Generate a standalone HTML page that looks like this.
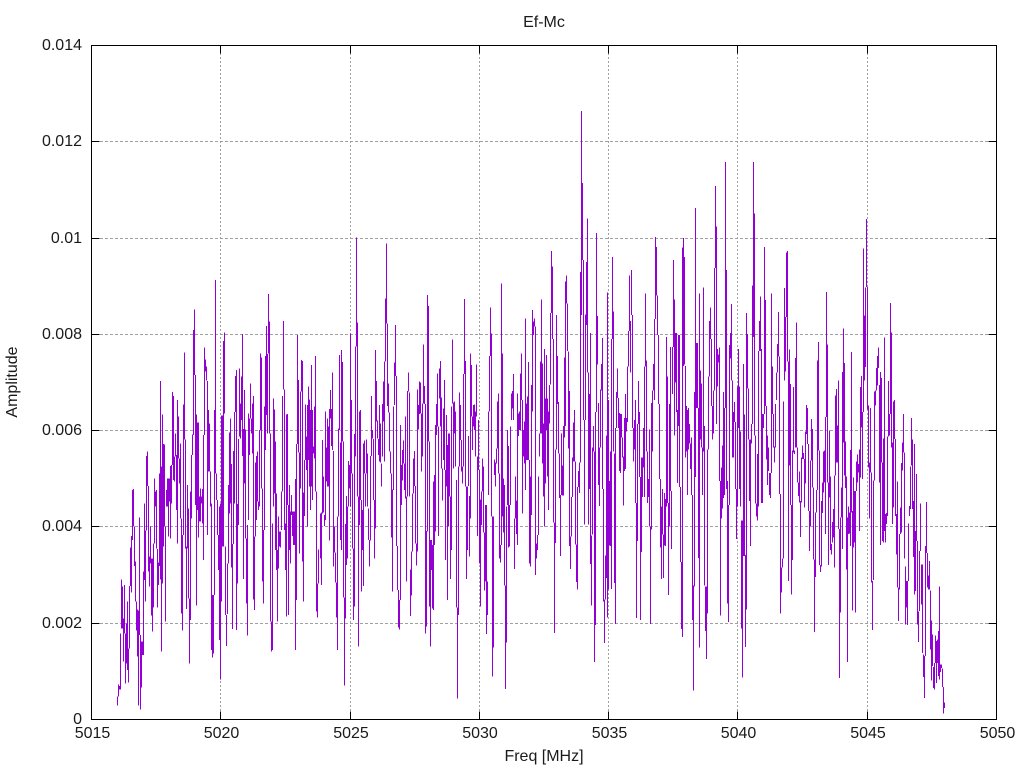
<!DOCTYPE html>
<html>
<head>
<meta charset="utf-8">
<title>Ef-Mc</title>
<style>
html,body{margin:0;padding:0;background:#fff;width:1024px;height:768px;overflow:hidden}
svg{display:block}
text{font-family:"Liberation Sans",sans-serif;font-size:16px;fill:#1a1a1a}
</style>
</head>
<body>
<svg width="1024" height="768" viewBox="0 0 1024 768" xmlns="http://www.w3.org/2000/svg">
<rect width="1024" height="768" fill="#fff"/>
<g stroke="#a0a0a0" stroke-width="1" fill="none" shape-rendering="crispEdges">
<path stroke-dasharray="3 2" d="M100 141.5H988M100 238.5H988M100 334.5H988M100 430.5H988M100 526.5H988M100 623.5H988"/>
<path stroke-dasharray="2 2" d="M220.5 53V711M350.5 53V711M479.5 53V711M608.5 53V711M737.5 53V711M867.5 53V711"/>
</g>
<g stroke="#9400d3" fill="none" stroke-width="3" shape-rendering="crispEdges">
<path transform="translate(90,270) scale(.33333)" d="M82 1280V1307M85 1243V1280M88 1248V1258M91 1090V1258M94 928V1075M97 950V1075M100 1045V1175M103 945V1090M106 1090V1240M109 1060V1180M112 995V1200M115 1135V1238M118 948V1135M121 832V948M124 798V968M127 660V810M130 657V770M133 770V888M136 875V995M139 995V1082M142 1018V1160M145 1022V1307M148 742V1095M151 1095V1318M154 1115V1252M157 1115V1155M160 905V1155M163 700V930M166 782V995M169 558V782M172 544V648M175 648V905M178 860V950M181 770V880M184 865V1037M187 865V1085M190 820V1012M193 625V820M196 665V710M199 660V835M202 837V1012M205 878V945M208 610V888M211 333V928M214 590V1145M217 433V940M220 522V830M223 523V770M226 770V1055M229 660V710M232 625V710M235 625V800M238 625V695M241 588V805M244 585V700M247 366V585M250 378V630M253 560V635M256 490V560M259 555V720M262 390V820M265 440V565M268 565V640M271 520V745M274 745V1030M277 795V1082M280 403V795M283 247V508M286 508V835M289 830V1017M292 645V835M295 715V985M298 985V1180M301 665V1050M304 555V745M307 493V555M310 180V495M313 118V315M316 315V705M319 433V1007M322 458V720M325 458V803M328 680V755M331 655V755M334 680V700M337 657V760M340 495V870M343 232V495M346 268V305M349 290V332M352 333V795M355 420V605M358 460V605M361 605V710M364 700V1140M367 975V1163M370 975V1150M373 420V975M376 30V610M379 610V690M382 690V795M385 795V900M388 710V1110M391 700V1228M394 437V995M397 437V830M400 213V830M403 187V430M406 830V1035M409 1035V1128M412 880V1032M415 645V880M418 488V730M421 445V700M424 582V893M427 822V1077M430 543V822M433 426V700M436 318V426M439 300V1080M442 702V940M445 507V765M448 295V500M451 400V505M454 320V450M457 192V558M460 477V927M463 360V640M466 478V805M469 805V1000M472 765V1097M475 430V750M478 445V555M481 340V445M484 445V490M487 400V550M490 378V988M493 800V1020M496 578V800M499 558V750M502 545V695M505 695V720M508 480V710M511 250V480M514 262V655M517 655V935M520 780V1000M523 410V780M526 258V540M529 168V435M532 252V490M535 72V250M538 155V490M541 490V1055M544 1055V1145M547 760V1140M550 385V710M553 418V670M556 515V840M559 670V900M562 840V1055M565 740V895M568 785V830M571 785V833M574 665V780M577 378V665M580 153V358M583 358V780M586 760V900M589 433V1040M592 432V705M595 705V1035M598 645V840M601 725V880M604 675V735M607 725V798M610 725V825M613 725V825M616 627V1140M619 522V990M622 195V522M625 330V548M628 548V850M631 365V655M634 270V365M637 273V875M640 668V995M643 570V738M646 403V570M649 500V600M652 405V770M655 350V570M658 388V650M661 420V720M664 285V650M667 420V690M670 530V550M673 410V565M676 258V665M679 665V1025M682 940V1043M685 838V940"/>
<path transform="translate(320,230) scale(.33333)" d="M1 850V985M4 848V1065M7 630V850M10 740V848M13 855V888M16 545V870M19 652V755M22 565V770M25 590V770M28 537V932M31 480V565M34 537V648M37 427V660M40 663V1010M43 890V968M46 968V1058M49 1058V1163M52 860V1260M55 595V860M58 375V600M61 638V930M64 360V960M67 396V635M70 635V1103M73 1103V1367M76 882V1165M79 798V1005M82 830V985M85 693V830M88 705V775M91 310V830M94 510V730M97 730V955M100 955V1170M103 612V1130M106 350V680M109 22V350M112 277V800M115 800V1250M118 545V885M121 540V810M124 810V1085M127 840V960M130 640V1068M133 632V730M136 730V830M139 628V730M142 670V830M145 835V930M148 930V1010M151 678V932M154 498V678M157 600V625M160 627V810M163 810V985M166 360V895M169 453V575M172 572V625M175 627V675M178 525V695M181 580V698M184 700V770M187 522V680M190 455V575M193 395V695M196 205V395M199 40V280M202 280V528M205 460V548M208 548V665M211 665V730M214 730V923M217 778V1085M220 530V780M223 398V525M226 285V438M229 438V948M232 948V1080M235 1080V1193M238 1110V1198M241 585V1110M244 705V825M247 660V752M250 632V700M253 700V780M256 560V805M259 800V1055M262 483V800M265 427V485M268 488V800M271 1018V1158M274 965V1097M277 790V965M280 685V790M283 663V768M286 768V940M289 940V1007M292 478V965M295 525V598M298 455V552M301 458V550M304 550V725M307 520V680M310 343V520M313 468V522M316 522V1210M319 903V1190M322 195V905M325 228V635M328 635V1130M331 930V1250M334 930V1020M337 945V1135M340 755V1140M343 735V945M346 585V905M349 522V615M352 430V590M355 590V918M358 415V505M361 393V590M364 503V715M367 715V812M370 535V690M373 450V720M376 720V990M379 555V770M382 645V1110M385 610V890M388 610V800M391 800V1047M394 530V960M397 328V520M400 518V715M403 515V610M406 545V710M409 750V1133M412 1133V1405M415 710V1155M418 487V710M421 525V630M424 630V725M427 710V760M430 432V710M433 207V432M436 393V770M439 770V1047M442 770V960M445 618V768M448 798V980M451 370V865M454 405V560M457 560V660M460 525V590M463 523V600M466 545V680M469 403V560M472 680V918M475 570V720M478 720V1000M481 808V1130M484 785V885M487 685V785M490 710V908M493 908V1082M496 825V1055M499 825V1212M502 1055V1155M505 545V795M508 378V545M511 232V378M514 310V860M517 860V1340M520 860V1253M523 688V735M526 697V770M529 655V700M532 515V655M535 490V730M538 730V985M541 945V998M544 160V945M547 370V860M550 745V908M553 765V1067M556 1067V1377M559 830V1238M562 600V825M565 648V952M568 825V950M571 590V825M574 490V570M577 483V535M580 432V570M583 865V1017M586 740V865M589 812V912M592 490V945M595 550V618M598 545V600M601 430V600M604 370V510M607 510V850M610 600V680M613 575V700M616 265V780M619 520V690M622 500V690M625 396V690M628 690V1000M631 740V1010M634 465V855M637 240V545M640 275V315M643 265V290M646 290V1035M649 940V985M652 915V960M655 740V915M658 610V680M661 395V610M664 208V610M667 400V700M670 580V800M673 357V890M676 505V760M679 375V600M682 505V740M685 545V840M688 465V580"/>
<path transform="translate(550,100) scale(.33333,.3949)" d="M1 540V720M4 382V540M7 422V605M10 605V1070M13 1070V1350M16 885V1122M19 545V885M22 648V770M25 765V895M28 895V1008M31 1000V1155M34 845V1000M37 925V1002M40 825V1002M43 652V855M46 460V825M49 445V515M52 515V635M55 637V883M58 737V1130M61 1105V1188M64 1005V1105M67 905V1005M70 817V915M73 785V915M76 915V1125M79 1125V1220M82 980V1240M85 940V980M88 918V995M91 435V918M94 28V545M97 210V405M100 405V810M103 810V1075M106 543V810M109 410V570M112 300V690M115 690V1075M118 745V985M121 590V1175M124 1103V1280M127 880V1100M130 825V890M133 890V1423M136 790V1330M139 337V790M142 547V670M145 767V975M148 880V1028M151 733V880M154 668V735M157 603V985M160 985V1270M163 1265V1375M166 1153V1265M169 850V1210M172 488V1310M175 760V1240M178 965V1128M181 890V1130M184 605V1238M187 397V605M190 535V890M193 895V1223M196 830V1327M199 740V830M202 680V755M205 755V830M208 792V940M211 795V945M214 795V855M217 855V905M220 903V1027M223 805V940M226 745V935M229 805V840M232 675V815M235 585V675M238 445V585M241 560V690M244 430V545M247 545V830M250 830V915M253 810V885M256 760V1020M259 1020V1312M262 820V1117M265 712V820M268 790V955M271 955V1317M274 905V1145M277 905V1005M280 830V930M283 675V1005M286 490V675M289 660V890M292 890V1020M295 960V1005M298 835V1080M301 1080V1327M304 767V1088M307 735V890M310 668V735M313 555V760M316 347V555M319 372V495M322 495V595M325 595V770M328 770V960M331 960V1133M334 1030V1213M337 985V1100M340 1100V1210M343 995V1128M346 1010V1130M349 600V1030M352 700V1020M355 1020V1253M358 770V1080M361 625V990M364 990V1137M367 625V745M370 405V625M373 505V850M376 590V715M379 590V790M382 785V970M385 595V825M388 595V980M391 980V1170M394 1170V1340M397 373V1360M400 350V673M403 397V670M406 673V905M409 775V890M412 785V1000M415 780V885M418 820V870M421 870V935M424 855V1000M427 1000V1317M430 1230V1495M433 740V1232M436 273V955M439 615V780M442 615V780M445 780V1160M448 490V1387M451 685V860M454 718V880M457 880V1000M460 475V890M463 825V1230M466 1232V1345M469 1232V1415M472 885V1300M475 700V885M478 560V700M481 525V605M484 605V775M487 775V860M490 735V845M493 425V735M496 218V425M499 320V820M502 630V725M505 645V665M508 627V965M511 965V1305M514 930V1060M517 875V1035M520 740V1008M523 780V1000M526 157V780M529 430V985M532 965V1275M535 1025V1322M538 620V1025M541 590V655M544 517V710M547 710V905M550 790V905M553 765V815M556 815V985M559 985V1112M562 725V1030M565 630V830M568 725V985M571 840V1030M574 1065V1338M577 1065V1463M580 668V1155M583 797V1155M586 1152V1385M589 540V1290M592 592V730M595 730V860M598 860V1015M601 860V1130M604 820V870M607 470V820M610 157V600M613 288V850M616 850V1022M619 1022V1055M622 897V1065M625 635V1030M628 560V635M631 497V635M634 630V1020M637 795V1020M640 795V830M643 372V795M646 507V775M649 775V910M652 850V975M655 880V940M658 945V1000M661 945V1008M664 490V945M667 675V795M670 795V880M673 878V918M676 770V880M679 690V760M682 618V690M685 537V650M688 650V998"/>
<path transform="translate(770,200) scale(.33333,.3342)" d="M31 880V1238M34 1100V1175M37 1072V1100M40 603V1072M43 263V540M46 350V513M49 157V350M52 153V483M55 483V1140M58 448V795M61 550V913M64 913V1180M67 750V1077M70 560V755M73 750V760M76 473V740M79 367V740M82 740V845M85 845V885M88 812V905M91 900V1008M94 770V905M97 735V775M100 757V775M103 775V920M106 693V848M109 613V700M112 622V730M115 730V930M118 930V1050M121 780V975M124 655V780M127 685V860M130 860V1075M133 1075V1293M136 935V1128M139 867V935M142 480V867M145 425V750M148 750V1092M151 1092V1113M154 900V1097M157 845V937M160 753V875M163 750V845M166 650V1000M169 275V650M172 433V845M175 845V1092M178 690V890M181 827V1047M184 1030V1060M187 963V1025M190 925V1010M193 825V1100M196 585V825M199 565V785M202 675V785M205 540V985M208 985V1430M211 950V1235M214 860V950M217 515V1045M220 385V725M223 487V825M226 722V862M229 827V1105M232 950V1383M235 917V1000M238 935V998M241 748V1035M244 455V935M247 930V1228M250 830V1040M253 870V1025M256 870V1235M259 783V870M262 762V845M265 790V815M268 747V990M271 560V830M274 527V680M277 635V835M280 145V635M283 345V540M286 262V500M289 57V260M292 260V627M295 615V800M298 785V953M301 622V815M304 815V1145M307 1140V1287M310 840V1137M313 573V840M316 570V615M319 503V570M322 467V555M325 442V502M328 553V845M331 515V1033M334 533V785M337 785V1020M340 713V1025M343 412V990M346 940V1025M349 937V970M352 707V945M355 542V707M358 640V705M361 308V640M364 397V740M367 725V970M370 603V920M373 598V715M376 715V945M379 940V1060M382 843V1160M385 1160V1260M388 1000V1165M391 920V1000M394 787V995M397 725V810M400 640V755M403 755V1072M406 1097V1270M409 1140V1220M412 1140V1272M415 968V1140M418 915V945M421 797V925M424 652V795M427 717V925M430 900V1068M433 730V1180M436 990V1170M439 820V1020M442 1020V1270M445 1232V1322M448 1050V1230M451 908V1050M454 1090V1210M457 1090V1355M460 1360V1427M463 1365V1490M466 1035V1365M469 903V1057M472 1057V1160M475 1123V1165M478 1080V1165M481 1168V1345M484 1258V1438M487 1300V1395M490 1397V1460M493 1385V1465M496 1303V1385M499 1320V1445M502 1315V1385M505 1290V1425M508 1157V1435M511 1390V1412M514 1390V1400M517 1402V1457M520 1457V1537M523 1503V1520"/>
</g>
<g stroke="#000" stroke-width="1" fill="none" shape-rendering="crispEdges">
<path d="M91.5 45.5H996.5V719.5H91.5Z"/>
<path d="M91.5 141.5H99.5M91.5 238.5H99.5M91.5 334.5H99.5M91.5 430.5H99.5M91.5 526.5H99.5M91.5 623.5H99.5"/>
<path d="M988.5 141.5H996.5M988.5 238.5H996.5M988.5 334.5H996.5M988.5 430.5H996.5M988.5 526.5H996.5M988.5 623.5H996.5"/>
<path d="M220.5 45.5V53.5M350.5 45.5V53.5M479.5 45.5V53.5M608.5 45.5V53.5M737.5 45.5V53.5M867.5 45.5V53.5"/>
<path d="M220.5 711.5V719.5M350.5 711.5V719.5M479.5 711.5V719.5M608.5 711.5V719.5M737.5 711.5V719.5M867.5 711.5V719.5"/>
</g>
<g text-anchor="end">
<text x="82" y="50">0.014</text>
<text x="82" y="146">0.012</text>
<text x="82" y="243">0.01</text>
<text x="82" y="339">0.008</text>
<text x="82" y="435">0.006</text>
<text x="82" y="531">0.004</text>
<text x="82" y="628">0.002</text>
<text x="82" y="724">0</text>
</g>
<g text-anchor="middle">
<text x="92.5" y="738">5015</text>
<text x="221.5" y="738">5020</text>
<text x="351" y="738">5025</text>
<text x="480" y="738">5030</text>
<text x="609.5" y="738">5035</text>
<text x="738.5" y="738">5040</text>
<text x="868" y="738">5045</text>
<text x="997.5" y="738">5050</text>
<text x="544" y="761">Freq [MHz]</text>
<text x="544" y="27">Ef-Mc</text>
<text transform="translate(17,382) rotate(-90)">Amplitude</text>
</g>
</svg>
</body>
</html>
